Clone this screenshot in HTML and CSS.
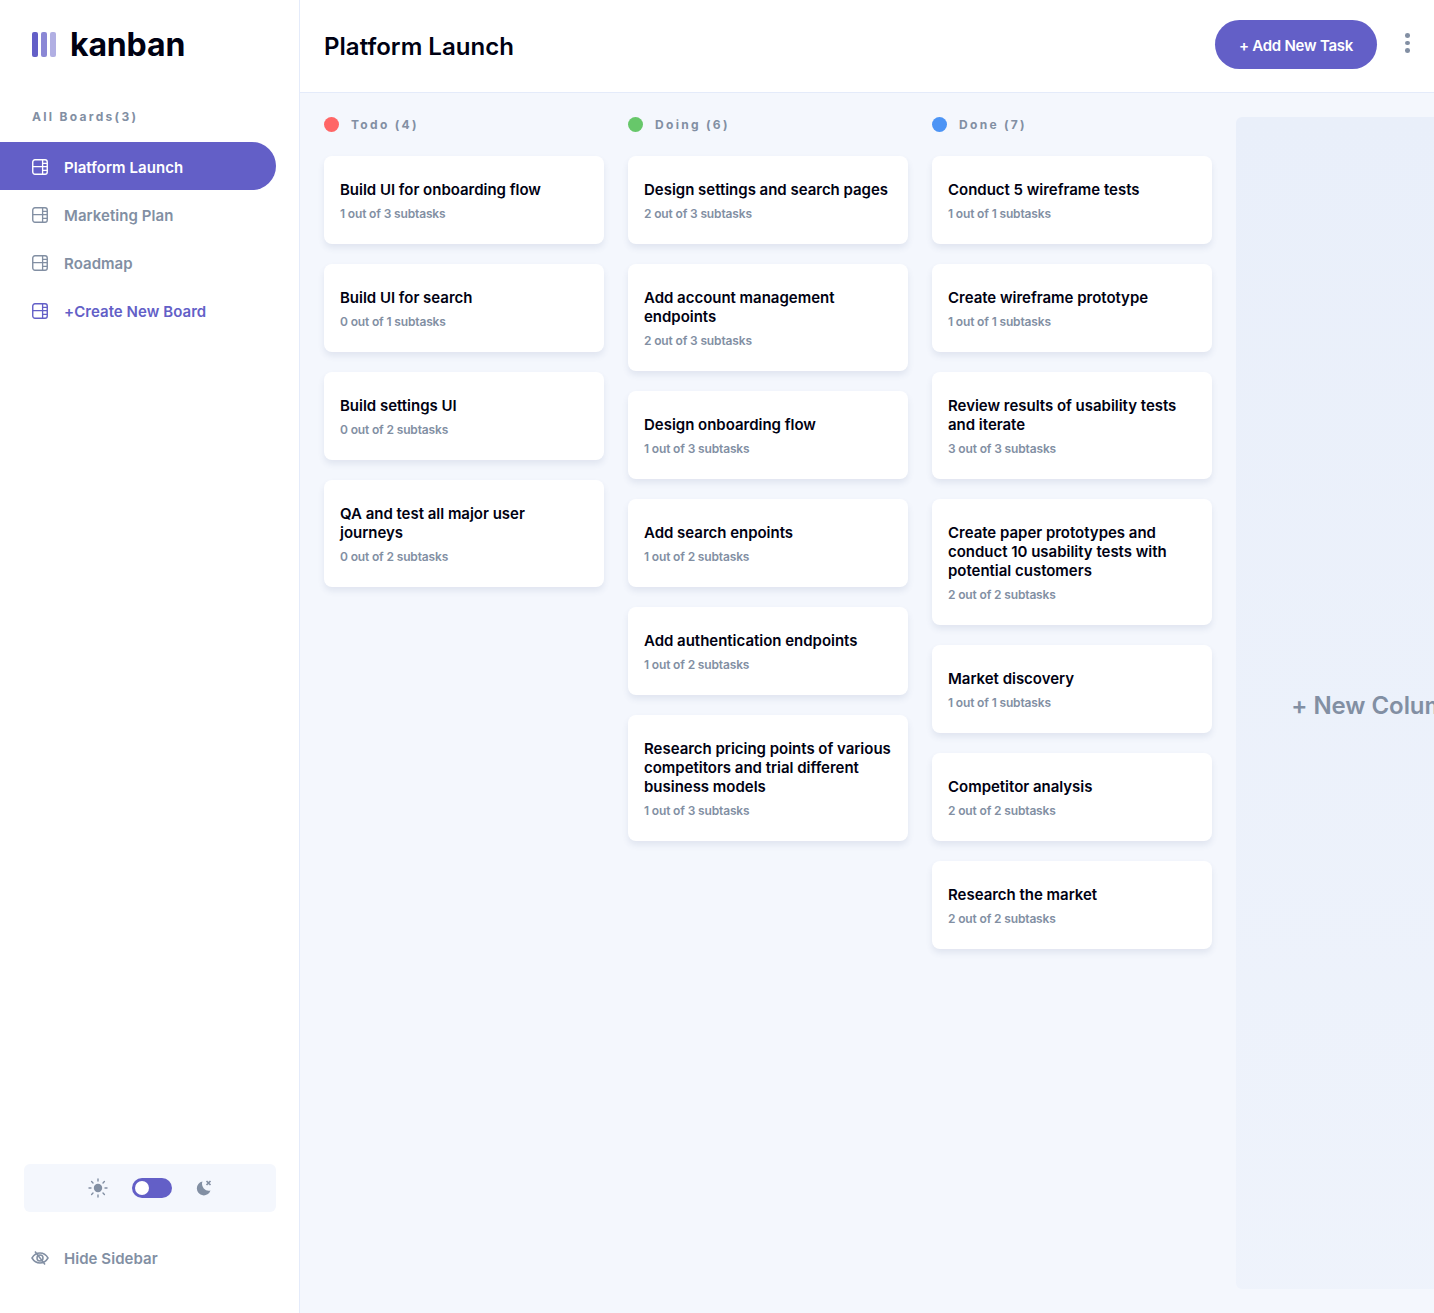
FILE: index.html
```html
<!DOCTYPE html>
<html lang="en">
<head>
<meta charset="utf-8">
<title>Kanban</title>
<link rel="stylesheet" href="styles.css">
</head>
<body>
<svg class="defs" width="0" height="0" aria-hidden="true">
  <symbol id="board" viewBox="0 0 16 16">
    <rect x="0.75" y="0.75" width="14.5" height="14.5" rx="2.2" fill="none" stroke="currentColor" stroke-width="1.4"/>
    <path d="M0.75 7.6H15.25M10.6 0.75V15.25M10.6 4.4H15.25M10.6 11.4H15.25" fill="none" stroke="currentColor" stroke-width="1.3"/>
  </symbol>
</svg>
<div class="app">
  <aside class="sidebar">
    <div class="logo">
      <svg class="logo-mark" viewBox="0 0 24 25" aria-hidden="true">
        <rect x="0" width="6" height="25" rx="2" fill="#635FC7"/>
        <rect x="9" width="6" height="25" rx="2" fill="#635FC7" opacity=".75"/>
        <rect x="18" width="6" height="25" rx="2" fill="#635FC7" opacity=".5"/>
      </svg>
      <span class="logo-text">kanban</span>
    </div>
    <h2 class="boards-title">All Boards(3)</h2>
    <nav class="nav">
      <a class="nav-item active"><svg class="nav-icon"><use href="#board"/></svg>Platform Launch</a>
      <a class="nav-item"><svg class="nav-icon"><use href="#board"/></svg>Marketing Plan</a>
      <a class="nav-item"><svg class="nav-icon"><use href="#board"/></svg>Roadmap</a>
      <a class="nav-item create"><svg class="nav-icon"><use href="#board"/></svg>+Create New Board</a>
    </nav>
    <div class="theme-box">
      <svg class="sun" viewBox="0 0 20 20" aria-hidden="true">
        <circle cx="10" cy="10" r="4.200" fill="#828FA3"/>
        <path d="M10 1v2M10 17v2M1 10h2M17 10h2M3.600 3.600L5 5M15 15l1.400 1.400M3.600 16.400L5 15M15 5l1.400-1.400" stroke="#828FA3" stroke-width="1.400" stroke-linecap="round" fill="none"/>
      </svg>
      <span class="toggle"><span class="knob"></span></span>
      <svg class="moon" viewBox="0 0 16 16" aria-hidden="true">
        <path d="M6.500 1.500A7 7 0 1 0 14.500 10.500A6.800 6.800 0 0 1 6.500 1.500Z" fill="#828FA3"/>
        <path d="M10.500 1l4 4M14.500 1l-4 4" stroke="#828FA3" stroke-width="1.700" fill="none"/>
      </svg>
    </div>
    <a class="hide">
      <svg class="eye" viewBox="0 0 18 16" aria-hidden="true">
        <path d="M1 8c2-3.400 4.800-5 8-5s6 1.600 8 5c-2 3.400-4.800 5-8 5s-6-1.600-8-5Z" fill="none" stroke="#828FA3" stroke-width="1.500"/>
        <circle cx="9" cy="8" r="3" fill="none" stroke="#828FA3" stroke-width="1.500"/>
        <path d="M4 1.500L14 14.500" stroke="#828FA3" stroke-width="1.500"/>
      </svg>
      Hide Sidebar
    </a>
  </aside>
  <div class="main">
    <header class="topbar">
      <h1 class="page-title">Platform Launch</h1>
      <button class="add-btn">+ Add New Task</button>
      <span class="dots"><i></i><i></i><i></i></span>
    </header>
    <section class="board">
      <div class="column">
        <h3 class="col-head"><span class="dot red"></span>Todo (4)</h3>
        <article class="card"><h4>Build UI for onboarding flow</h4><p>1 out of 3 subtasks</p></article>
        <article class="card"><h4>Build UI for search</h4><p>0 out of 1 subtasks</p></article>
        <article class="card"><h4>Build settings UI</h4><p>0 out of 2 subtasks</p></article>
        <article class="card"><h4>QA and test all major user journeys</h4><p>0 out of 2 subtasks</p></article>
      </div>
      <div class="column">
        <h3 class="col-head"><span class="dot green"></span>Doing (6)</h3>
        <article class="card"><h4>Design settings and search pages</h4><p>2 out of 3 subtasks</p></article>
        <article class="card"><h4>Add account management endpoints</h4><p>2 out of 3 subtasks</p></article>
        <article class="card"><h4>Design onboarding flow</h4><p>1 out of 3 subtasks</p></article>
        <article class="card"><h4>Add search enpoints</h4><p>1 out of 2 subtasks</p></article>
        <article class="card"><h4>Add authentication endpoints</h4><p>1 out of 2 subtasks</p></article>
        <article class="card"><h4>Research pricing points of various competitors and trial different business models</h4><p>1 out of 3 subtasks</p></article>
      </div>
      <div class="column">
        <h3 class="col-head"><span class="dot blue"></span>Done (7)</h3>
        <article class="card"><h4>Conduct 5 wireframe tests</h4><p>1 out of 1 subtasks</p></article>
        <article class="card"><h4>Create wireframe prototype</h4><p>1 out of 1 subtasks</p></article>
        <article class="card"><h4>Review results of usability tests and iterate</h4><p>3 out of 3 subtasks</p></article>
        <article class="card"><h4>Create paper prototypes and conduct 10 usability tests with potential customers</h4><p>2 out of 2 subtasks</p></article>
        <article class="card"><h4>Market discovery</h4><p>1 out of 1 subtasks</p></article>
        <article class="card"><h4>Competitor analysis</h4><p>2 out of 2 subtasks</p></article>
        <article class="card"><h4>Research the market</h4><p>2 out of 2 subtasks</p></article>
      </div>
      <div class="new-col">+ New Column</div>
    </section>
  </div>
</div>
</body>
</html>
```
FILE: styles.css
```css
* { box-sizing: border-box; }
html, body { margin: 0; padding: 0; height: 100%; overflow: hidden; }
body { font-family: Inter, "Noto Sans", sans-serif; background: #F4F7FD; color: #000112; }
.defs { position: absolute; }
.app { display: flex; height: 100vh; }

.sidebar { flex: 0 0 300px; background: #fff; border-right: 1px solid #E4EBFA; display: flex; flex-direction: column; padding-bottom: 45px; }
.logo { display: flex; align-items: center; gap: 14px; padding: 32px 0 0 32px; box-sizing: content-box; height: 25px; }
.logo-mark { width: 24px; height: 25px; flex: none; }
.logo-text { font-size: 32px; font-weight: 700; letter-spacing: -0.15px; line-height: 25px; }
.boards-title { margin: 52px 0 18px 32px; font-size: 12px; line-height: 15px; font-weight: 700; letter-spacing: 2.3px; color: #828FA3; }
.nav { display: flex; flex-direction: column; }
.nav-item { display: flex; align-items: center; gap: 16px; height: 48px; width: 276px; padding: 2px 0 0 32px; font-size: 15px; font-weight: 600; letter-spacing: 0.05px; color: #828FA3; border-radius: 0 24px 24px 0; }
.nav-item.active { background: #635FC7; color: #fff; }
.nav-item.create { color: #635FC7; }
.nav-icon { width: 16px; height: 16px; flex: none; }
.theme-box { margin: auto 23px 0 24px; height: 48px; background: #F4F7FD; border-radius: 6px; display: flex; align-items: center; justify-content: center; gap: 24px; }
.sun { width: 20px; height: 20px; }
.moon { width: 16px; height: 16px; }
.toggle { width: 40px; height: 20px; background: #635FC7; border-radius: 10px; display: flex; align-items: center; padding-left: 3px; }
.knob { width: 14px; height: 14px; border-radius: 50%; background: #fff; }
.hide { display: flex; align-items: center; gap: 15px; margin-top: 36px; padding-left: 31px; height: 20px; font-size: 15px; font-weight: 600; letter-spacing: 0.05px; color: #828FA3; }
.eye { width: 18px; height: 16px; flex: none; }

.main { flex: 1; min-width: 0; display: flex; flex-direction: column; }
.topbar { flex: none; height: 93px; background: #fff; border-bottom: 1px solid #E4EBFA; display: flex; align-items: center; padding: 0 24px; }
.page-title { margin: 2px auto 0 0; font-size: 24px; font-weight: 600; letter-spacing: 0.03px; line-height: 30px; }
.add-btn { width: 162px; height: 49px; margin-top: -3px; padding-top: 2px; border: 0; border-radius: 24.5px; background: #635FC7; color: #fff; font: 600 15px Inter, sans-serif; letter-spacing: -0.25px; }
.dots { display: flex; flex-direction: column; gap: 3px; margin: -6px 0 0 28px; }
.dots i { width: 5px; height: 4.7px; border-radius: 50%; background: #828FA3; }

.board { flex: 1; display: flex; align-items: flex-start; gap: 24px; padding: 24px 0 24px 24px; overflow: hidden; }
.column { flex: 0 0 280px; display: flex; flex-direction: column; gap: 20px; }
.col-head { display: flex; align-items: center; gap: 12px; margin: 0 0 4px; height: 15px; font-size: 12px; line-height: 15px; font-weight: 700; letter-spacing: 2.3px; color: #828FA3; }
.dot { width: 15px; height: 15px; border-radius: 50%; flex: none; }
.red { background: #FF6666; }
.green { background: #67C76A; }
.blue { background: #4C94F5; }
.card { background: #fff; border-radius: 8px; padding: 24px 16px 23px; box-shadow: 0 4px 6px rgba(54, 78, 126, 0.1); }
.card h4 { margin: 0 0 7px; font-size: 15px; line-height: 19px; font-weight: 600; letter-spacing: -0.02px; color: #000112; }
.card p { margin: 0; font-size: 12px; line-height: 15px; font-weight: 600; letter-spacing: -0.15px; color: #828FA3; }
.new-col { flex: 0 0 280px; align-self: stretch; padding-top: 4px; background: linear-gradient(180deg, #E9EFFA 0%, rgba(233, 239, 250, 0.5) 100%); border-radius: 6px; display: flex; align-items: center; justify-content: center; font-size: 24px; font-weight: 600; letter-spacing: -0.05px; color: #828FA3; white-space: nowrap; }
```
